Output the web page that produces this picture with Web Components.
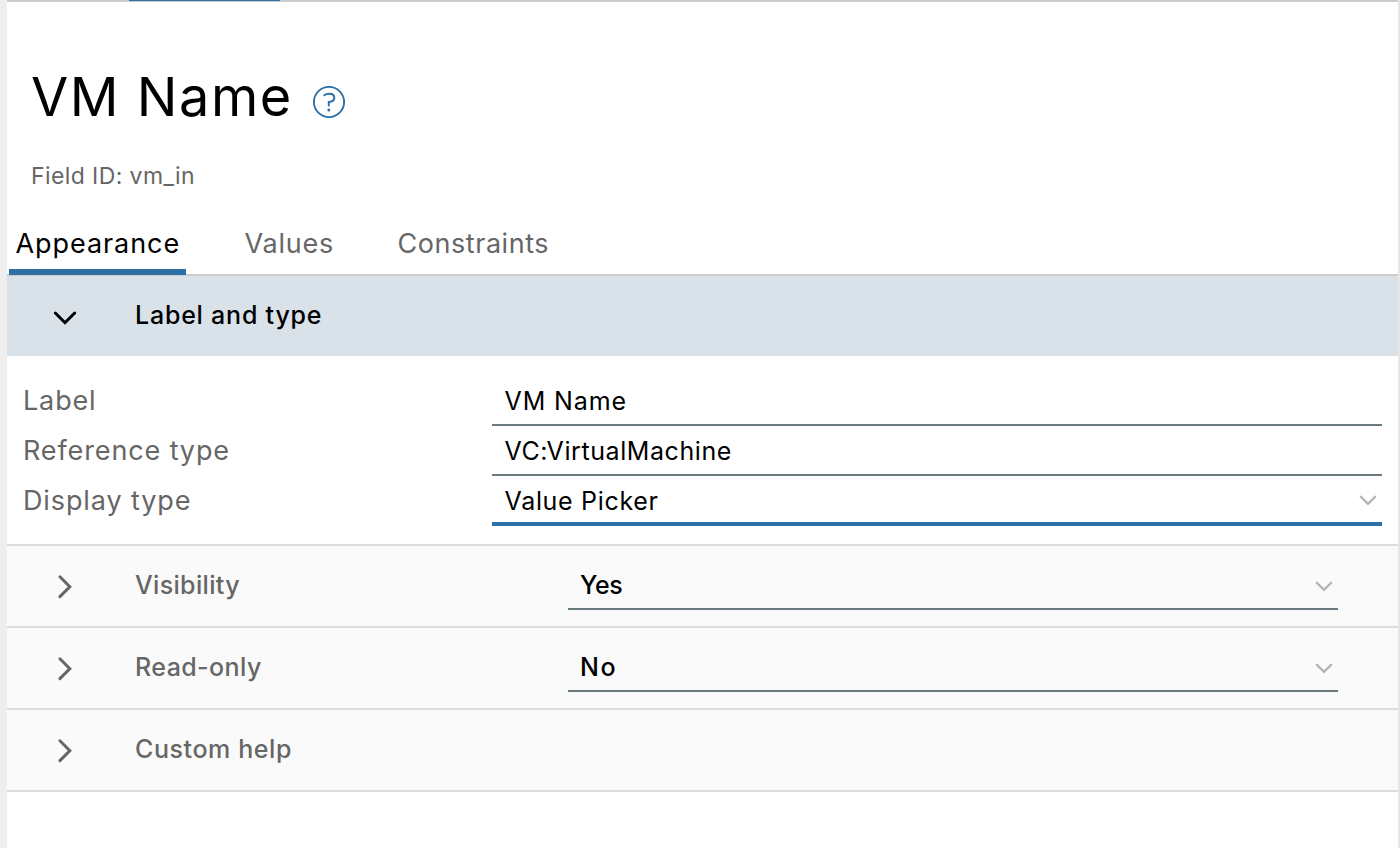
<!DOCTYPE html>
<html lang="en">
<head>
<meta charset="utf-8">
<title>VM Name</title>
<style>
  html, body { margin: 0; height: 100%; overflow: hidden; background: #fff; }
  body { font-family: Inter, "Open Sans", sans-serif; color: #000; }
</style>
</head>
<body>
<form-designer>
  <field-header field-id="Field ID: vm_in">VM Name</field-header>
  <tab-bar>
    <tab-item active style="--w:177px;--ls:.93px">Appearance</tab-item>
    <tab-item style="--w:101px;--ls:.78px">Values</tab-item>
    <tab-item style="--w:165px;--ls:.55px">Constraints</tab-item>
  </tab-bar>
  <accordion-panel open label="Label and type" style="--ls:.78px">
    <form-row label="Label" style="--ls:.85px"><value-field style="--vls:.89px">VM Name</value-field></form-row>
    <form-row label="Reference type" style="--ls:.88px"><value-field style="--vls:.58px">VC:VirtualMachine</value-field></form-row>
    <form-row label="Display type" style="--ls:.88px"><value-field select focused style="--vls:.68px">Value Picker</value-field></form-row>
  </accordion-panel>
  <accordion-panel label="Visibility" style="--ls:.33px"><value-field slot="control" select compact style="--vls:-.3px">Yes</value-field></accordion-panel>
  <accordion-panel label="Read-only" style="--ls:.42px"><value-field slot="control" select compact style="--vls:1.5px">No</value-field></accordion-panel>
  <accordion-panel label="Custom help" style="--ls:.58px"></accordion-panel>
</form-designer>

<script>
class BaseElement extends HTMLElement {
  connectedCallback() {
    if (this.shadowRoot) return;
    this.attachShadow({ mode: 'open' }).innerHTML = this.render();
  }
}

customElements.define('form-designer', class extends BaseElement {
  render() {
    return `<style>
      :host { display: grid; grid-template-columns: 7px minmax(0, 1fr) 2px; height: 848px; }
      .left { background: #eee; }
      .right { background: #e6e6e6; }
      .top { height: 2px; background: #ccc; }
      .top i { display: block; width: 151px; height: 1px; margin-left: 122px; background: #2d70a6; }
      main { background: #fff; }
    </style>
    <div class="left"></div>
    <main><div class="top"><i></i></div><slot></slot></main>
    <div class="right"></div>`;
  }
});

customElements.define('field-header', class extends BaseElement {
  render() {
    return `<style>
      :host { display: block; height: 210px; box-sizing: border-box; padding: 62px 0 0 24px; }
      .title { display: flex; height: 64px; }
      h1 { margin: 0; font-size: 54px; font-weight: 390; line-height: 66px; letter-spacing: 1.55px; width: 282px; white-space: nowrap; }
      p { margin: 32px 0 0 0; font-size: 23px; line-height: 32px; letter-spacing: .4px; color: #666; }
    </style>
    <div class="title"><h1><slot></slot></h1><help-icon></help-icon></div>
    <p>${this.getAttribute('field-id')}</p>`;
  }
});

customElements.define('help-icon', class extends BaseElement {
  render() {
    return `<style>:host { display: block; padding-top: 22px; } svg { display: block; }</style>
    <svg width="32" height="32" viewBox="0 0 32 32" fill="none" stroke="#2d70a6">
      <circle cx="16" cy="16" r="15.1" stroke-width="1.9"/>
      <path d="M11.300 9.300C12.700 8.300 14.400 7.800 16.300 7.800c3.100 0 5 1.600 5 3.900 0 2.600-2.100 4-5.500 4.400v3.500" stroke-width="2" stroke-linecap="round" stroke-linejoin="miter"/>
      <circle cx="15.800" cy="24.100" r="1.500" fill="#2d70a6" stroke="none"/>
    </svg>`;
  }
});

customElements.define('tab-bar', class extends BaseElement {
  render() {
    return `<style>
      :host { display: flex; gap: 52px; height: 62px; padding-left: 2px; border-bottom: 2px solid #ccc; }
    </style><slot></slot>`;
  }
});

customElements.define('tab-item', class extends BaseElement {
  render() {
    return `<style>
      :host { display: block; box-sizing: border-box; flex: none; width: var(--w); height: 63px; padding: 16px 0 0 6.5px;
        font-size: 27px; font-weight: 420; line-height: 32px; letter-spacing: var(--ls); color: #666; white-space: nowrap; }
      :host([active]) { color: #000; border-bottom: 6px solid #2d70a6; }
    </style><slot></slot>`;
  }
});

customElements.define('accordion-panel', class extends BaseElement {
  render() {
    const open = this.hasAttribute('open');
    const path = open ? 'M9.300 16 19 25.700 28.700 16' : 'M13.900 9.800 23.800 19.700 13.900 29.600';
    return `<style>
      :host { display: block; border-bottom: 2px solid #ddd; }
      header { display: grid; grid-template-columns: 38px 432px 770px; height: 80px; padding-left: 39px;
        background: #fafafa; color: #666; font-size: 25px; font-weight: 550; }
      :host([open]) header { background: #d9e1e9; color: #000; }
      .label { padding-left: 51px; line-height: 78px; letter-spacing: var(--ls); white-space: nowrap; }
      .caret { padding-top: 21px; }
      svg { display: block; }
      .control { padding: 16px 0 0 52px; width: 770px; }
      .body { padding: 20px 16px 18px; }
    </style>
    <header>
      <div class="caret"><svg width="38" height="38" viewBox="0 0 38 38" fill="none" stroke="currentColor" stroke-width="3" stroke-linecap="round"><path d="${path}"/></svg></div>
      <div class="label">${this.getAttribute('label')}</div>
      <div class="control"><slot name="control"></slot></div>
    </header>
    ${open ? '<div class="body"><slot></slot></div>' : ''}`;
  }
});

customElements.define('form-row', class extends BaseElement {
  render() {
    return `<style>
      :host { display: grid; grid-template-columns: 469px 1fr; height: 50px; }
      label { padding-top: 2px; font-size: 27px; font-weight: 420; line-height: 46px; letter-spacing: var(--ls); color: #666; }
    </style><label>${this.getAttribute('label')}</label><slot></slot>`;
  }
});

customElements.define('value-field', class extends BaseElement {
  render() {
    return `<style>
      :host { display: flex; justify-content: space-between; box-sizing: border-box; height: 50px; padding: 2px 5px 0 12.5px;
        border-bottom: 2px solid #6a7a81; font-size: 25px; font-weight: 410; line-height: 46px; letter-spacing: var(--vls); color: #000; }
      :host([focused]) { border-bottom: 4px solid #2d70a6; }
      :host([compact]) { height: 48px; padding: 0 5px 0 12px; font-weight: 530; }
      svg { display: block; margin-top: 17px; }
      :host([compact]) svg { margin-top: 19px; }
    </style><span><slot></slot></span>
    ${this.hasAttribute('select') ? '<svg width="18" height="11" viewBox="0 0 18 11" fill="none" stroke="#b3b3b3" stroke-width="2.300" stroke-linecap="round"><path d="M1.800 1.700 9 8.800 16.200 1.700"/></svg>' : ''}`;
  }
});
</script>
</body>
</html>
